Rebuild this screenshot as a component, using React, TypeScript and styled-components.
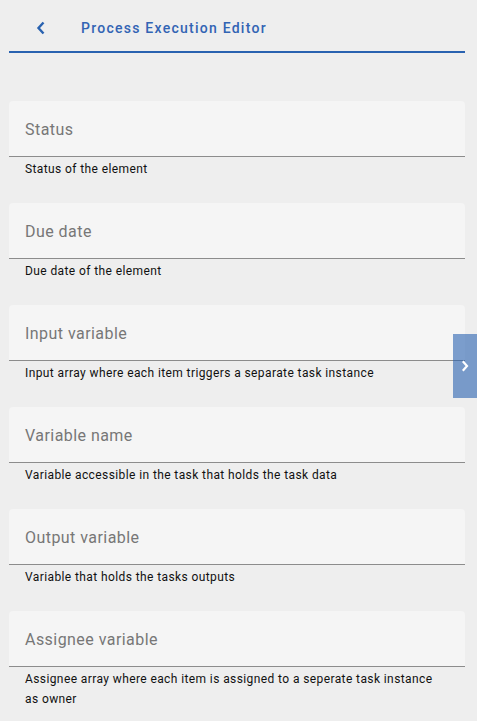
import React from 'react';
import styled, { createGlobalStyle } from 'styled-components';

const fields = [
  { label: 'Status', hint: 'Status of the element' },
  { label: 'Due date', hint: 'Due date of the element' },
  { label: 'Input variable', hint: 'Input array where each item triggers a separate task instance' },
  { label: 'Variable name', hint: 'Variable accessible in the task that holds the task data' },
  { label: 'Output variable', hint: 'Variable that holds the tasks outputs' },
  {
    label: 'Assignee variable',
    hint: 'Assignee array where each item is assigned to a seperate task instance as owner',
  },
];

function App() {
  return (
    <>
      <GlobalStyle />
      <Page>
        <Header>
          <BackButton aria-label="back">
            <svg width="10" height="14" viewBox="0 0 10 14">
              <path d="M7.5 1.5 L2.5 7 L7.5 12.5" fill="none" stroke="currentColor" strokeWidth="2.4" />
            </svg>
          </BackButton>
          <Title>Process Execution Editor</Title>
        </Header>
        <Form>
          {fields.map((f) => (
            <Field key={f.label}>
              <InputBox>
                <Label>{f.label}</Label>
              </InputBox>
              <Hint>{f.hint}</Hint>
            </Field>
          ))}
        </Form>
        <SideTab aria-label="expand">
          <svg width="8" height="12" viewBox="0 0 8 12">
            <path d="M1.8 1.3 L6 6 L1.8 10.7" fill="none" stroke="#fff" strokeWidth="2.2" />
          </svg>
        </SideTab>
      </Page>
    </>
  );
}

export default App;

const GlobalStyle = createGlobalStyle`
  html, body {
    margin: 0;
    padding: 0;
    background: #eeeeee;
  }
  body {
    font-family: Roboto, 'Noto Sans', sans-serif;
  }
`;

const Page = styled.main`
  position: relative;
  min-height: 721px;
  padding: 0 12px 0 9px;
  box-sizing: border-box;
  overflow: hidden;
`;

const Header = styled.header`
  display: flex;
  align-items: center;
  box-sizing: border-box;
  height: 53px;
  padding-top: 5px;
  border-bottom: 2px solid #2962b0;
`;

const BackButton = styled.button`
  display: flex;
  align-items: center;
  justify-content: center;
  width: 20px;
  height: 20px;
  margin: 0 0 0 22px;
  padding: 0;
  border: none;
  background: none;
  color: #2962b0;
  cursor: pointer;
`;

const Title = styled.h1`
  margin: 0 0 0 30px;
  font-size: 14px;
  font-weight: 500;
  letter-spacing: 1.25px;
  color: #3264b4;
`;

const Form = styled.div`
  display: flex;
  flex-direction: column;
  padding-top: 48px;
`;

const Field = styled.div`
  display: flex;
  flex-direction: column;
  min-height: 102px;
`;

const InputBox = styled.div`
  display: flex;
  align-items: center;
  height: 55px;
  padding: 0 16px;
  background: #f5f5f5;
  border-radius: 4px 4px 0 0;
  border-bottom: 1px solid #8c8c8c;
`;

const Label = styled.span`
  font-size: 16px;
  letter-spacing: 0.45px;
  color: #777777;
  padding-top: 2px;
`;

const Hint = styled.p`
  margin: 2px 0 0;
  padding: 0 20px 0 16px;
  font-size: 12px;
  line-height: 20px;
  letter-spacing: 0.4px;
  color: #111111;
`;

const SideTab = styled.button`
  position: absolute;
  top: 334px;
  right: 0;
  width: 24px;
  height: 64px;
  display: flex;
  align-items: center;
  justify-content: center;
  padding: 0;
  border: none;
  background: rgba(41, 98, 176, 0.6);
  cursor: pointer;
`;
